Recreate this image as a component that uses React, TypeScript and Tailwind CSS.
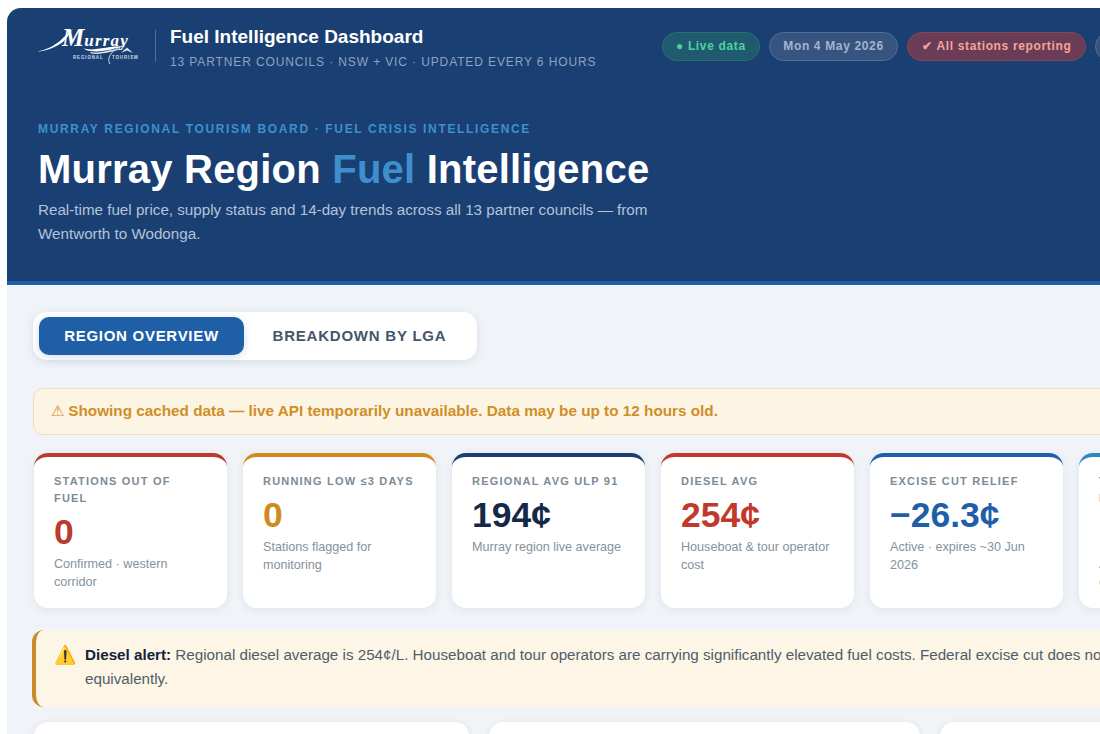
import React from "react";

const font = { fontFamily: '"Liberation Sans", Arial, sans-serif' };

function Logo() {
  return (
    <svg width="104" height="38" viewBox="0 0 104 38" className="shrink-0" aria-label="Murray Regional Tourism">
      <path d="M0 24.5 C9 23 17 19 24 13 C28 9 32 5 36 2 C33 6 30 10 27 14 C20 20 10 24 0 24.5Z" fill="#fff" />
      <text x="25" y="18.5" fontFamily="'Liberation Serif', serif" fontStyle="italic" fontWeight="700" fill="#fff">
        <tspan fontSize="25">M</tspan>
        <tspan fontSize="17" letterSpacing="1.2">urray</tspan>
      </text>
      <path d="M46 21 C56 25 68 19 89 19 C76 21.5 62 27 49 23Z" fill="#fff" />
      <path d="M53 25 C63 27 75 21 88 22 C76 23.5 64 28.5 54 26.5Z" fill="#dbe4f0" />
      <path d="M85 19 C75 23 69 31 73 37" fill="none" stroke="#e6edf6" strokeWidth="0.9" />
      <path d="M84 26 L90 20.5 L96 26 L90 23.5Z" fill="#dbe4f0" />
      <text x="36" y="32" fontFamily="'Liberation Sans', sans-serif" fontWeight="700" fontSize="4.5" letterSpacing="0.85" fill="#cfdaea">REGIONAL</text>
      <text x="75" y="32" fontFamily="'Liberation Sans', sans-serif" fontWeight="700" fontSize="4.5" letterSpacing="0.85" fill="#cfdaea">TOURISM</text>
    </svg>
  );
}

function Pill({ className, children }: { className: string; children: React.ReactNode }) {
  return (
    <span className={`h-[29px] flex items-center rounded-full border text-[12px] font-bold tracking-[0.65px] whitespace-nowrap ${className}`}>
      {children}
    </span>
  );
}

const cards = [
  { label: "Stations out of fuel", value: "0", color: "text-[#b93a2e]", top: "border-t-[#b93a2e]", sub: "Confirmed · western corridor" },
  { label: "Running low ≤3 days", value: "0", color: "text-[#d08a1e]", top: "border-t-[#d08a1e]", sub: "Stations flagged for monitoring" },
  { label: "Regional avg ULP 91", value: "194¢", color: "text-[#14294a]", top: "border-t-[#1a3f73]", sub: "Murray region live average" },
  { label: "Diesel avg", value: "254¢", color: "text-[#c0392b]", top: "border-t-[#c0392b]", sub: "Houseboat & tour operator cost" },
  { label: "Excise cut relief", value: "−26.3¢", color: "text-[#1f5fa8]", top: "border-t-[#1f5fa8]", sub: "Active · expires ~30 Jun 2026" },
  { label: "Tourism towns in region", value: "13", color: "text-[#2e86c1]", top: "border-t-[#2e86c1]", sub: "Across the Murray river corridor" },
];

export default function App() {
  return (
    <div style={font} className="h-screen overflow-hidden bg-white pl-[7px] pt-[8px]">
      <div className="w-[1300px] min-h-[800px] bg-[#f0f4f8] rounded-t-[14px] overflow-hidden">
        <header className="bg-[#1a3f73] border-b-[4px] border-[#1f5fa8] h-[277px]">
          <div className="flex items-center h-[52px] pt-[12px] box-content pl-[30px]">
            <Logo />
            <div className="w-px h-[32px] bg-white/25 ml-[14px] mr-[14px]" />
            <div className="w-[492px] shrink-0 mt-[2px]">
              <div className="text-[19px] leading-[24px] font-bold text-white">Fuel Intelligence Dashboard</div>
              <div className="text-[12px] leading-[16px] mt-[5px] tracking-[0.88px] text-[#8ea3c0] uppercase whitespace-nowrap">
                13 partner councils · NSW + VIC · Updated every 6 hours
              </div>
            </div>
            <div className="flex gap-[9px]">
              <Pill className="px-[13px] bg-[#1f5a6e] border-[#2a7070] text-[#4fcfa5]">● Live data</Pill>
              <Pill className="px-[13.5px] bg-[#36547f] border-[#506e98] text-[#a3b4cc]">Mon 4 May 2026</Pill>
              <Pill className="px-[14px] bg-[#6b3c55] border-[#84475a] text-[#f2a59b]">✔ All stations reporting</Pill>
              <Pill className="px-[13.5px] bg-[#36547f] border-[#506e98] text-[#a3b4cc]">Updated</Pill>
            </div>
          </div>
          <div className="pl-[31px] pt-[49px]">
            <div className="text-[12px] leading-[16px] font-bold tracking-[1.66px] uppercase text-[#3f8fcf]">
              Murray Regional Tourism Board · Fuel Crisis Intelligence
            </div>
            <h1 className="text-[40px] leading-[44px] mt-[10px] font-bold tracking-[0.22px] text-white">
              Murray Region <span className="text-[#3f8fcf]">Fuel</span> Intelligence
            </h1>
            <p className="text-[15.2px] leading-[24px] mt-[7px] w-[640px] text-[#b4c3d8]">
              Real-time fuel price, supply status and 14-day trends across all 13 partner councils — from Wentworth to Wodonga.
            </p>
          </div>
        </header>

        <main className="pl-[26px] pt-[27px]">
          <div className="flex items-center bg-white rounded-[14px] pl-[6px] pr-[5px] py-[5px] h-[48px] w-[444px] shadow-[0_2px_10px_rgba(30,70,130,0.12)]">
            <div className="h-[38px] w-[205px] flex items-center justify-center rounded-[10px] bg-[#1f5fa8] text-white text-[15px] font-bold tracking-[0.72px] uppercase shadow-[0_2px_8px_rgba(31,95,168,0.2)]">
              Region overview
            </div>
            <div className="flex-1 flex items-center justify-center pl-[3px] text-[#44566a] text-[15px] font-bold tracking-[0.78px] uppercase">
              Breakdown by LGA
            </div>
          </div>

          <div className="mt-[28px] h-[47px] w-[1200px] flex items-center pl-[17px] rounded-[10px] bg-[#fdf5e3] border border-[#f0dcb4] text-[15.3px] font-bold text-[#d08e28] whitespace-pre">
            <span className="font-normal">⚠ </span>Showing cached data — live API temporarily unavailable. Data may be up to 12 hours old.
          </div>

          <div className="mt-[18px] flex gap-[16px] pl-[1px]">
            {cards.map((c) => (
              <div key={c.label} className={`w-[193px] h-[155px] shrink-0 bg-white rounded-[14px] border-t-[4px] ${c.top} px-[20px] pt-[16px] shadow-[0_2px_10px_rgba(30,50,80,0.08)]`}>
                <div className="text-[11px] leading-[17px] font-bold tracking-[1.2px] uppercase text-[#7c8b98]">{c.label}</div>
                <div className={`text-[35.5px] leading-[38px] mt-[6px] font-bold ${c.color}`}>{c.value}</div>
                <div className="text-[12.6px] leading-[18px] mt-[4px] text-[#84929e]">{c.sub}</div>
              </div>
            ))}
          </div>

          <div className="mt-[22px] -ml-[1px] w-[1200px] h-[77px] flex gap-[11px] rounded-[12px] bg-[#fdf5e6] border-l-[4px] border-[#c98a27] pl-[18px] pt-[13px] text-[15.2px] leading-[24px] text-[#4f5d6a]">
            <span className="text-[18px] leading-[24px] font-['Noto_Color_Emoji','DejaVu_Sans',sans-serif] text-[#f2c230] w-[20px] shrink-0">⚠</span>
            <p className="w-[1100px] whitespace-nowrap">
              <b className="text-[#14233a]">Diesel alert:</b> Regional diesel average is 254¢/L. Houseboat and tour operators are carrying significantly elevated fuel costs. Federal excise cut does not reduce diesel costs
              <br />
              equivalently.
            </p>
          </div>

          <div className="mt-[15px] flex gap-[20px] pl-[1px]">
            <div className="w-[435px] h-[80px] shrink-0 bg-white rounded-[14px] shadow-[0_1px_6px_rgba(30,50,80,0.1)]" />
            <div className="w-[431px] h-[80px] shrink-0 bg-white rounded-[14px] shadow-[0_1px_6px_rgba(30,50,80,0.1)]" />
            <div className="w-[431px] h-[80px] shrink-0 bg-white rounded-[14px] shadow-[0_1px_6px_rgba(30,50,80,0.1)]" />
          </div>
        </main>
      </div>
    </div>
  );
}
